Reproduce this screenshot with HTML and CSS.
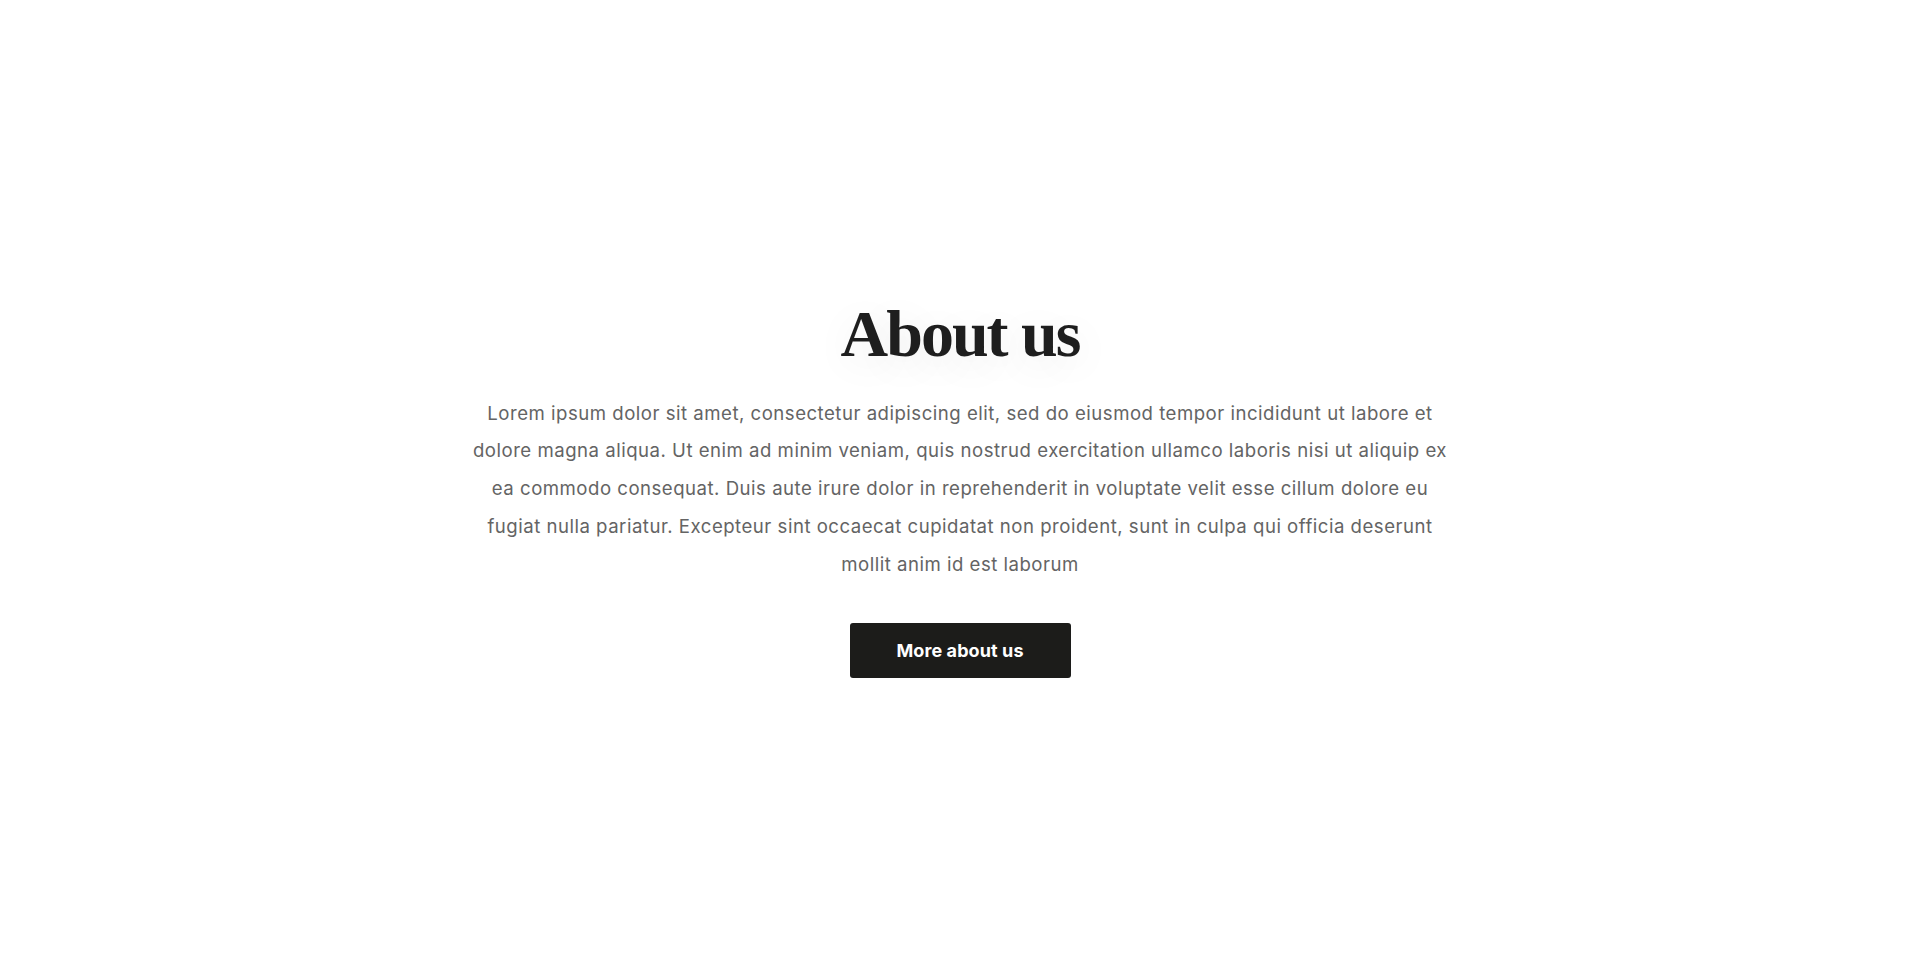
FILE: index.html
```html
<!DOCTYPE html>
<html lang="en">
<head>
<meta charset="utf-8">
<title>About us</title>
<link rel="stylesheet" href="styles.css">
</head>
<body>
<main class="page">
  <section class="about">
    <h1 class="about-title">About us</h1>
    <p class="about-text">Lorem ipsum dolor sit amet, consectetur adipiscing elit, sed do eiusmod tempor incididunt ut labore et dolore magna aliqua. Ut enim ad minim veniam, quis nostrud exercitation ullamco laboris nisi ut aliquip ex ea commodo consequat. Duis aute irure dolor in reprehenderit in voluptate velit esse cillum dolore eu fugiat nulla pariatur. Excepteur sint occaecat cupidatat non proident, sunt in culpa qui officia deserunt mollit anim id est laborum</p>
    <a class="about-button" href="#">More about us</a>
  </section>
</main>
</body>
</html>
```

FILE: styles.css
```css
* { box-sizing: border-box; }
html, body { margin: 0; padding: 0; background: #ffffff; }
.page {
  height: 966px;
  display: flex;
  align-items: center;
  justify-content: center;
  font-family: Inter, "DejaVu Sans", sans-serif;
}
.about {
  display: flex;
  flex-direction: column;
  align-items: center;
  width: 1000px;
  padding-top: 6px;
}
.about-title {
  margin: 0;
  font-family: "Liberation Serif", serif;
  font-weight: 700;
  font-size: 66px;
  line-height: 80px;
  letter-spacing: -2px;
  color: #1e1e1e;
  text-shadow: 0 8px 40px rgba(0, 0, 0, 0.09);
}
.about-text {
  margin: 21px 0 0;
  text-align: center;
  font-size: 18.6px;
  line-height: 37.7px;
  letter-spacing: 0.5px;
  color: #646464;
  width: 990px;
}
.about-button {
  margin-top: 40px;
  display: flex;
  align-items: center;
  justify-content: center;
  width: 221px;
  height: 55px;
  background: #1c1c1a;
  color: #ffffff;
  border-radius: 3px;
  text-decoration: none;
  font-weight: 700;
  font-size: 18px;
  letter-spacing: 0.1px;
}
```
